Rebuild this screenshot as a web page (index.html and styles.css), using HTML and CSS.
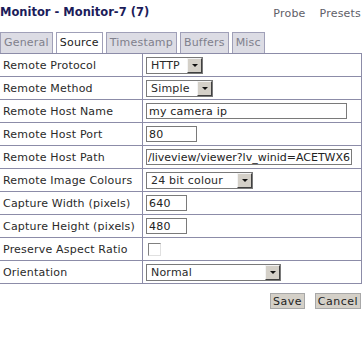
FILE: index.html
```html
<!DOCTYPE html>
<html lang="en">
<head>
    <meta charset="UTF-8">
    <title>Monitor - Monitor-7</title>
    <link rel="stylesheet" href="styles.css">
</head>
<body>
    <div class="header">
        <div class="title">Monitor - Monitor-7 (7)</div>
        <div class="links"><a href="#">Probe</a><a href="#">Presets</a></div>
    </div>
    <ul class="tabs">
        <li class="tab">General</li>
        <li class="tab active">Source</li>
        <li class="tab">Timestamp</li>
        <li class="tab">Buffers</li>
        <li class="tab">Misc</li>
    </ul>
    <table class="form">
        <tr>
            <td class="label">Remote Protocol</td>
            <td><span class="select w-http"><span class="value">HTTP</span><span class="arrow"></span></span></td>
        </tr>
        <tr>
            <td class="label">Remote Method</td>
            <td><span class="select w-method"><span class="value">Simple</span><span class="arrow"></span></span></td>
        </tr>
        <tr>
            <td class="label">Remote Host Name</td>
            <td><input class="text w-host" type="text" value="my camera ip"></td>
        </tr>
        <tr>
            <td class="label">Remote Host Port</td>
            <td><input class="text w-port" type="text" value="80"></td>
        </tr>
        <tr>
            <td class="label">Remote Host Path</td>
            <td><input class="text w-path" type="text" value="/liveview/viewer?lv_winid=ACETWX6"></td>
        </tr>
        <tr>
            <td class="label">Remote Image Colours</td>
            <td><span class="select w-colours"><span class="value">24 bit colour</span><span class="arrow"></span></span></td>
        </tr>
        <tr>
            <td class="label">Capture Width (pixels)</td>
            <td><input class="text w-size" type="text" value="640"></td>
        </tr>
        <tr>
            <td class="label">Capture Height (pixels)</td>
            <td><input class="text w-size" type="text" value="480"></td>
        </tr>
        <tr>
            <td class="label">Preserve Aspect Ratio</td>
            <td><span class="checkbox"></span></td>
        </tr>
        <tr>
            <td class="label">Orientation</td>
            <td><span class="select w-orient"><span class="value">Normal</span><span class="arrow"></span></span></td>
        </tr>
    </table>
    <div class="actions">
        <button class="btn">Save</button>
        <button class="btn">Cancel</button>
    </div>
</body>
</html>
```

FILE: styles.css
```css
body {
    font-family: "DejaVu Sans", Verdana, sans-serif;
    font-size: 11px;
    letter-spacing: 0.2px;
    color: #2a2a2a;
    background-color: white;
    margin: 0;
    padding: 0;
}
.header {
    display: flex;
    justify-content: space-between;
    align-items: flex-start;
    height: 32px;
    padding-top: 5px;
    box-sizing: border-box;
}
.title {
    font-weight: bold;
    font-size: 11.5px;
    letter-spacing: 0;
    color: #1c1c5a;
}
.links {
    padding-top: 2px;
    padding-right: 1px;
}
.links a {
    color: #606068;
    text-decoration: none;
    margin-left: 14px;
}
.tabs {
    display: flex;
    gap: 3px;
    list-style: none;
    margin: 0;
    padding: 0;
    height: 21px;
}
.tab {
    border: 1px solid #a0a0b8;
    border-bottom: none;
    background-color: #dcdce4;
    color: #80808c;
    padding: 0 3px;
    line-height: 20px;
}
.tab.active {
    background-color: white;
    color: #222;
}
.form {
    width: 100%;
    border-collapse: collapse;
}
.form td {
    border: 1px solid #8c8ca8;
    padding: 2px 3px;
    height: 18px;
    vertical-align: middle;
}
.form td.label {
    width: 136px;
    border-left: none;
}
.text {
    font-family: inherit;
    font-size: 11px;
    letter-spacing: 0.2px;
    color: #222;
    height: 16px;
    box-sizing: border-box;
    border: 1px solid #7a7a7a;
    padding: 0 2px;
    margin: 0;
    vertical-align: middle;
}
.w-host { width: 201px; }
.w-port { width: 51px; }
.w-path {
    width: 206px;
    padding: 0 1px;
    letter-spacing: 0;
}
.w-size { width: 41px; }
.select {
    display: inline-flex;
    align-items: center;
    justify-content: space-between;
    height: 17px;
    box-sizing: border-box;
    border: 1px solid #7a7a7a;
    padding: 0 0 0 4px;
    background-color: white;
    vertical-align: middle;
}
.w-http { width: 57px; }
.w-method { width: 67px; }
.w-colours { width: 107px; }
.w-orient { width: 135px; }
.arrow {
    width: 15px;
    height: 15px;
    box-sizing: border-box;
    background-color: #d4d0c8;
    border-top: 1px solid #f4f4f4;
    border-left: 1px solid #f4f4f4;
    border-right: 1px solid #404040;
    border-bottom: 1px solid #404040;
    display: flex;
    align-items: center;
    justify-content: center;
}
.arrow::after {
    content: "";
    border-left: 3px solid transparent;
    border-right: 3px solid transparent;
    border-top: 3px solid #111;
}
.checkbox {
    display: inline-block;
    width: 13px;
    height: 13px;
    box-sizing: border-box;
    margin-left: 2px;
    border-top: 1px solid #808080;
    border-left: 1px solid #808080;
    border-right: 1px solid #e0e0e0;
    border-bottom: 1px solid #e0e0e0;
    vertical-align: middle;
}
.actions {
    text-align: right;
    padding: 9px 1px 0 0;
}
.btn {
    font-family: inherit;
    font-size: 11px;
    letter-spacing: 0.5px;
    color: #222;
    background-color: #d4d0c8;
    border: 1px solid #a8a8a8;
    padding: 0 2px;
    height: 16px;
    margin-left: 6px;
}
```
